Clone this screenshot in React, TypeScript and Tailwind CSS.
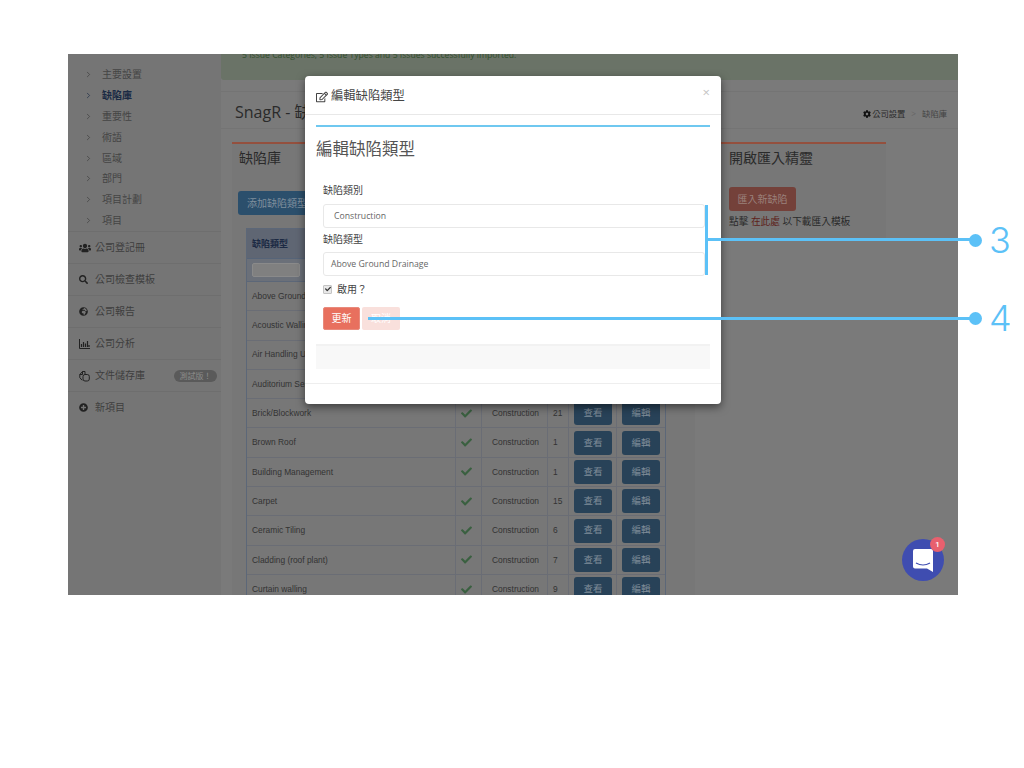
import React from "react";
import { FaUsers, FaSearch, FaGlobeAfrica, FaPlusCircle, FaRegEdit, FaCheck, FaCog } from "react-icons/fa";
import { ChevronRight } from "lucide-react";

const cjk = "font-['Open_Sans','Noto_Sans_CJK_TC',sans-serif]";

const subItems = ["主要設置", "缺陷庫", "重要性", "術語", "區域", "部門", "項目計劃", "項目"];

const BarIcon = () => (
  <svg width="11" height="10" viewBox="0 0 11 10" fill="none" stroke="#222">
    <path d="M.5 0v9.5H11" />
    <path d="M2.5 8V5M4.5 8V3M6.5 8V4.5M8.5 8V2M10 8V6" strokeWidth="1.2" />
  </svg>
);
const DocsIcon = () => (
  <svg width="11" height="12" viewBox="0 0 11 12" fill="none" stroke="#222" strokeWidth="1">
    <path d="M6 1.5H3.5L.8 4.5v3.2l2.4 2.6" />
    <path d="M3.5 1.5v3H.8" />
    <rect x="4" y="4.5" width="6.3" height="6.5" rx="2" />
    <path d="M6 1.5v3" />
  </svg>
);

const mainItems: { icon: React.ReactNode; label: string; badge?: string }[] = [
  { icon: <FaUsers size={12} color="#222" />, label: "公司登記冊" },
  { icon: <FaSearch size={9} color="#222" />, label: "公司檢查模板" },
  { icon: <FaGlobeAfrica size={9} color="#222" />, label: "公司報告" },
  { icon: <BarIcon />, label: "公司分析" },
  { icon: <DocsIcon />, label: "文件儲存庫", badge: "測試版！" },
  { icon: <FaPlusCircle size={9} color="#222" />, label: "新項目" },
];

const rows = [
  ["Above Ground Drainage", "3"],
  ["Acoustic Walling", "4"],
  ["Air Handling Units", "2"],
  ["Auditorium Seating", "1"],
  ["Brick/Blockwork", "21"],
  ["Brown Roof", "1"],
  ["Building Management", "1"],
  ["Carpet", "15"],
  ["Ceramic Tiling", "6"],
  ["Cladding (roof plant)", "7"],
  ["Curtain walling", "9"],
];

function Sidebar() {
  return (
    <aside className={`w-[153px] shrink-0 bg-[#757575] ${cjk}`}>
      <ul className="pt-[10px]">
        {subItems.map((t, i) => (
          <li key={t} className={`flex h-[20.9px] items-center pl-[16px] text-[10px] ${i === 1 ? "font-semibold text-[#1a2a44]" : "text-[#444444]"}`}>
            <ChevronRight size={9} strokeWidth={1.8} color={i === 1 ? "#1a2a44" : "#3c3c3c"} />
            <span className="ml-[9px]">{t}</span>
          </li>
        ))}
      </ul>
      <ul>
        {mainItems.map((m) => (
          <li key={m.label} className="flex h-[32px] items-center border-t border-[#6e6e6e] pl-[11px] pr-[4px] text-[10px] text-[#3e3e3e]">
            <span className="flex w-[16px] items-center">{m.icon}</span>
            <span>{m.label}</span>
            {m.badge && (
              <span className="ml-auto flex h-[12px] w-[43px] items-center justify-center rounded-full bg-[#5a5a5a] text-[8px] text-[#8c8c8c]">
                {m.badge}
              </span>
            )}
          </li>
        ))}
      </ul>
    </aside>
  );
}

function DefectTable() {
  const cell = "flex items-center border-r border-[#6a6d75]";
  const btn = "flex h-[24px] w-[38px] items-center justify-center rounded-[3px] bg-[#284258] text-[9.5px] text-[#7f8c98]";
  return (
    <div className="ml-[14px] mt-[13px] w-[420px] border-x border-t border-[#5c6778] font-['Liberation_Sans','Noto_Sans_CJK_TC',sans-serif] text-[8.4px] text-[#333333]">
      <div className="flex h-[30px] items-center border-b border-[#566478] bg-[#5f6673] pl-[5px] pt-[3px] text-[9px] font-bold text-[#1c2a44]">缺陷類型</div>
      <div className="flex h-[23px] items-center border-b border-[#5c6778] bg-[#6b7079] pl-[5px]">
        <div className="h-[14px] w-[48px] rounded-[2px] border border-[#8a8a8a] bg-[#808080]" />
      </div>
      {rows.map(([name, n]) => (
        <div key={name} className="flex h-[29.3px] border-b border-[#6a6d75] bg-[#777777]">
          <div className={`${cell} w-[209px] pl-[5px]`}>{name}</div>
          <div className={`${cell} w-[26px] justify-center pr-[4px]`}>
            <FaCheck size={11} color="#3a6040" />
          </div>
          <div className={`${cell} w-[66px] pl-[10px]`}>Construction</div>
          <div className={`${cell} w-[21px] pl-[5px]`}>{n}</div>
          <div className={`${cell} w-[48px] pl-[5px]`}>
            <span className={btn}>查看</span>
          </div>
          <div className="flex flex-1 items-center pl-[5px]">
            <span className={btn}>編輯</span>
          </div>
        </div>
      ))}
    </div>
  );
}

function Background() {
  return (
    <div className="flex h-[541px] w-[890px] overflow-hidden bg-[#7a7a7a]">
      <Sidebar />
      <main className={`min-w-0 flex-1 ${cjk}`}>
        <div className="h-[26px] overflow-hidden rounded-bl-[3px] bg-[#6a7367] pl-[21px] text-[8.65px] leading-[3px] text-[#33502e]">
          5 Issue Categories, 5 Issue Types and 5 Issues successfully imported.
        </div>
        <div className="mt-[11px] flex h-[38px] items-end justify-between border-y border-[#747474] pb-[4px] pl-[14px] pr-[11px]">
          <span className="text-[16px] leading-[24px] text-[#2a2a2a]">SnagR - 缺陷庫</span>
          <span className="flex items-center gap-[1px] pb-[4px] text-[8.3px] text-[#2a2a2a]">
            <FaCog size={8} color="#111" />
            <span>公司設置</span>
            <span className="mx-[5px] text-[#666]">&gt;</span>
            <span className="text-[#444]">缺陷庫</span>
          </span>
        </div>
        <div className="ml-[11px] mt-[13px] flex items-start gap-[25px]">
          <section className="h-[460px] w-[463px] shrink-0 border-t-2 border-[#94503e] bg-[#777777]">
            <h2 className="pl-[7px] pt-[3px] text-[14px] text-[#2a2a2a]">缺陷庫</h2>
            <div className="ml-[6px] mt-[23px] flex h-[24px] w-[90px] items-center rounded-[3px] bg-[#2b4f6c] pl-[9px] text-[10px] text-[#7f8e9c]">添加缺陷類型</div>
            <DefectTable />
          </section>
          <section className="h-[96px] w-[166px] shrink-0 border-t-2 border-[#94503e] bg-[#777777] px-[9px]">
            <h2 className="pt-[3px] text-[14px] leading-[22px] text-[#2a2a2a]">開啟匯入精靈</h2>
            <div className="mt-[18px] flex h-[24px] w-[67px] items-center justify-center rounded-[3px] bg-[#74413a] text-[10px] text-[#9a807a]">匯入新缺陷</div>
            <p className="mt-[4px] text-[9.7px] text-[#2a2a2a]">
              點擊 <span className="text-[#5e1f1a]">在此處</span> 以下載匯入模板
            </p>
          </section>
        </div>
      </main>
    </div>
  );
}

function Modal() {
  const input = "flex h-[24px] items-center rounded-[3px] border-[1.5px] border-[#e8e8e8] bg-white pt-[1px] text-[8.7px] text-[#666]";
  return (
    <div className={`absolute left-[237px] top-[22px] h-[328px] w-[416px] rounded-[4px] bg-white shadow-[0_3px_9px_rgba(0,0,0,0.5)] ${cjk}`}>
      <div className="flex h-[39px] items-center border-b border-[#e8e8e8] pl-[11px] pr-[11px] pt-[3px]">
        <FaRegEdit size={12} color="#444" />
        <span className="ml-[3px] text-[12.3px] text-[#444]">編輯缺陷類型</span>
        <span className="ml-auto -mt-[8px] text-[13px] text-[#c4c4c4]">×</span>
      </div>
      <div className="px-[11px] pt-[10px]">
        <div className="h-[2px] bg-[#6fc8f0]" />
        <h3 className="mt-[11px] text-[16.5px] leading-[22px] text-[#555]">編輯缺陷類型</h3>
        <form className="pl-[7px] pr-[5px]">
          <div className="mt-[23px] text-[10px] leading-[14px] text-[#444]">缺陷類別</div>
          <div className={`${input} mt-[7px] pl-[10px]`}>Construction</div>
          <div className="mt-[4px] text-[10px] leading-[14px] text-[#444]">缺陷類型</div>
          <div className={`${input} mt-[6px] pl-[7px]`}>Above Ground Drainage</div>
          <div className="mt-[6px] flex h-[14px] items-center text-[10px] text-[#444]">
            <span className="flex h-[9px] w-[9px] items-center justify-center rounded-[1px] border border-[#c4c4c4] bg-[#e8e8e8]">
              <FaCheck size={6} color="#333" />
            </span>
            <span className="ml-[5px]">啟用？</span>
          </div>
          <div className="mt-[11px] flex gap-[2px]">
            <button type="button" className="h-[23px] w-[37px] rounded-[2px] border border-[#e88a7c] bg-[#e8705e] text-[10px] text-white">更新</button>
            <button type="button" className="h-[23px] w-[38px] rounded-[2px] bg-[#f9e0dc] text-[10px] text-white">取消</button>
          </div>
        </form>
        <div className="mt-[14px] h-[25px] border-t-2 border-[#f2f2f2] bg-[#f8f8f8]" />
      </div>
      <div className="mt-[14px] border-t border-[#eeeeee]" />
    </div>
  );
}

function Annotations() {
  const line = "absolute bg-[#5cc1f7]";
  const dot = "absolute h-[13px] w-[13px] rounded-full bg-[#5cc1f7]";
  const num = "absolute font-['Inter',sans-serif] text-[36px] font-light leading-[36px] text-[#5cc1f7]";
  return (
    <>
      <div className={`${line} left-[705px] top-[205px] h-[70px] w-[3px]`} />
      <div className={`${line} left-[707px] top-[238px] h-[3px] w-[268px]`} />
      <div className={`${dot} left-[969px] top-[234px]`} />
      <div className={`${num} left-[989px] top-[222px]`}>3</div>
      <div className={`${line} left-[368px] top-[317px] h-[3px] w-[607px]`} />
      <div className={`${dot} left-[969px] top-[312px]`} />
      <div className={`${num} left-[989px] top-[300px]`}>4</div>
    </>
  );
}

function Chat() {
  return (
    <div className="absolute left-[834px] top-[485px] flex h-[42px] w-[42px] items-center justify-center rounded-full bg-[#3f4db0]">
      <svg width="20" height="23" viewBox="0 0 20 23">
        <path d="M2 0h16a2 2 0 0 1 2 2v21l-6-3.5H2a2 2 0 0 1-2-2V2a2 2 0 0 1 2-2z" fill="#fff" />
        <path d="M3 14q7 4 14 0" stroke="#3f4db0" strokeWidth="1.2" fill="none" />
      </svg>
      <span className="absolute -right-[1px] -top-[2px] flex h-[15px] w-[15px] items-center justify-center rounded-full bg-[#e8606e] font-['Roboto',sans-serif] text-[8px] font-medium text-white">1</span>
    </div>
  );
}

export default function App() {
  return (
    <div className="relative h-[768px] w-[1024px] overflow-hidden bg-white pl-[68px] pt-[54px]">
      <div className="relative h-[541px] w-[890px]">
        <Background />
        <Modal />
        <Chat />
      </div>
      <div className="absolute left-0 top-0">
        <Annotations />
      </div>
    </div>
  );
}
